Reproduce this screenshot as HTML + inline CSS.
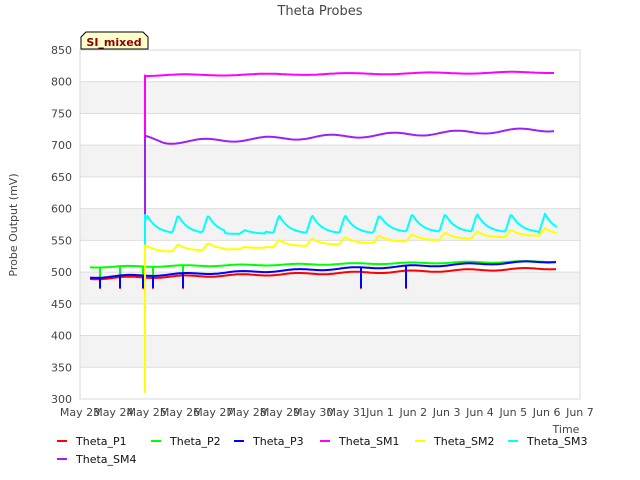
<!DOCTYPE html>
<html><head><meta charset="utf-8"><style>
body{margin:0;background:#fff;font-family:"DejaVu Sans","Liberation Sans",sans-serif;}
svg{display:block}
</style></head><body>
<svg id="s" width="640" height="480" xmlns="http://www.w3.org/2000/svg" font-family="DejaVu Sans, Liberation Sans, sans-serif">
<rect width="640" height="480" fill="#fff"/>
<text x="320" y="15" text-anchor="middle" font-size="13" fill="#444">Theta Probes</text>
<g id="bands"></g>
<g id="grid"></g>
<rect x="80" y="50" width="500" height="349" fill="none" stroke="#d8d8d8"/>
<g id="yl" font-size="11" fill="#444" text-anchor="end"></g>
<g id="xl" font-size="11" fill="#444" text-anchor="middle"></g>
<text x="17" y="225" font-size="11" fill="#444" text-anchor="middle" transform="rotate(-90 17 225)">Probe Output (mV)</text>
<text x="566" y="433" font-size="11" fill="#444" text-anchor="middle">Time</text>
<g id="data" fill="none" stroke-width="2" stroke-linejoin="round"></g>
<path d="M81,49 L81,37 L86,32 L143,32 L148,37 L148,49 Z" fill="#ffffcc" stroke="#000" stroke-width="1"/>
<text x="114" y="46" font-size="11" font-weight="bold" fill="#8b0000" text-anchor="middle">SI_mixed</text>
<g id="leg" font-size="11" fill="#111"></g>
</svg>
<script>
var NS="http://www.w3.org/2000/svg";
function el(p,t,a,txt){var e=document.createElementNS(NS,t);for(var k in a)e.setAttribute(k,a[k]);if(txt)e.textContent=txt;document.getElementById(p).appendChild(e);return e;}
function Y(v){return 50+(850-v)*349/550;}
for(var v=300;v<=850;v+=50){
 if(v>300 && v<850 && ((800-v)%100==0)) el("bands","rect",{x:80,y:Y(v),width:500,height:Y(v-50)-Y(v),fill:"#f3f3f3"});
 el("grid","line",{x1:80,x2:580,y1:Y(v),y2:Y(v),stroke:"#dedede"});
 el("yl","text",{x:72,y:Y(v)+4},String(v));
}
var xl=["May 23","May 24","May 25","May 26","May 27","May 28","May 29","May 30","May 31","Jun 1","Jun 2","Jun 3","Jun 4","Jun 5","Jun 6","Jun 7"];
for(var i=0;i<16;i++) el("xl","text",{x:80+i*33.33,y:416},xl[i]);
function path(col,pts){el("data","polyline",{points:pts.map(function(p){return p[0].toFixed(1)+","+Y(p[1]).toFixed(1)}).join(" "),stroke:col});}
function trend(x0,x1,v0,v1,wob,spikes,depth){var p=[];var si=0;for(var x=x0;x<=x1;x+=1){var v=v0+(v1-v0)*(x-x0)/(x1-x0)+wob*Math.sin(x/9);p.push([x,v]);if(si<spikes.length&&spikes[si]==x){p.push([x,depth]);p.push([x,v]);si++;}}return p;}
path("#00ff00",trend(90,556,508,517,1,[100,120,143,153,183],490));
path("#ff0000",trend(90,556,490,506,1.5,[100,120,143,153,183,361,406],475));
path("#0000ff",trend(90,556,492,517,1.5,[100,120,143,153,183,361,406],476));
var p=[[145,500],[145,810]];for(var x=146;x<=556;x+=3)p.push([x,810+5*(x-146)/410+1.2*Math.sin(x/13)]);path("#ff00ff",p);
p=[[145,400],[145,712]];for(x=146;x<=556;x+=3)p.push([x,(x<165?712-(x-146)*7/19:705+20*(x-165)/391)+3*Math.sin(x/10)]);path("#a020f0",p);
var pk=[147,178,208,245,279,312,345,379,412,445,477,511,545];
function osc(x,amp){var best=1e9;for(var i=0;i<pk.length;i++){var d=x-pk[i];if(d>=-6&&d<best)best=d;}if(best>40)best=40;return best<0?amp*(1+best/6):amp*Math.exp(-best/10);}
p=[[145,335],[145,590]];for(x=146;x<=557;x+=1.5){var a=(x>225&&x<265)?6:30;p.push([x,560+osc(x,a)+(x>380?2:0)]);}path("#00ffff",p);
p=[[145,310],[145,542]];for(x=146;x<=557;x+=1.5){var b=530+28*(x-150)/407;p.push([x,b+osc(x,(x>225&&x<265)?3:12)]);}path("#ffff00",p);
var L=[["Theta_P1","#ff0000",57,441],["Theta_P2","#00ff00",151,441],["Theta_P3","#0000ff",234,441],["Theta_SM1","#ff00ff",320,441],["Theta_SM2","#ffff00",415,441],["Theta_SM3","#00ffff",508,441],["Theta_SM4","#a020f0",57,459]];
L.forEach(function(l){el("leg","line",{x1:l[2],x2:l[2]+10,y1:l[3],y2:l[3],stroke:l[1],"stroke-width":2});el("leg","text",{x:l[2]+19,y:l[3]+4},l[0]);});
</script>
</body></html>
